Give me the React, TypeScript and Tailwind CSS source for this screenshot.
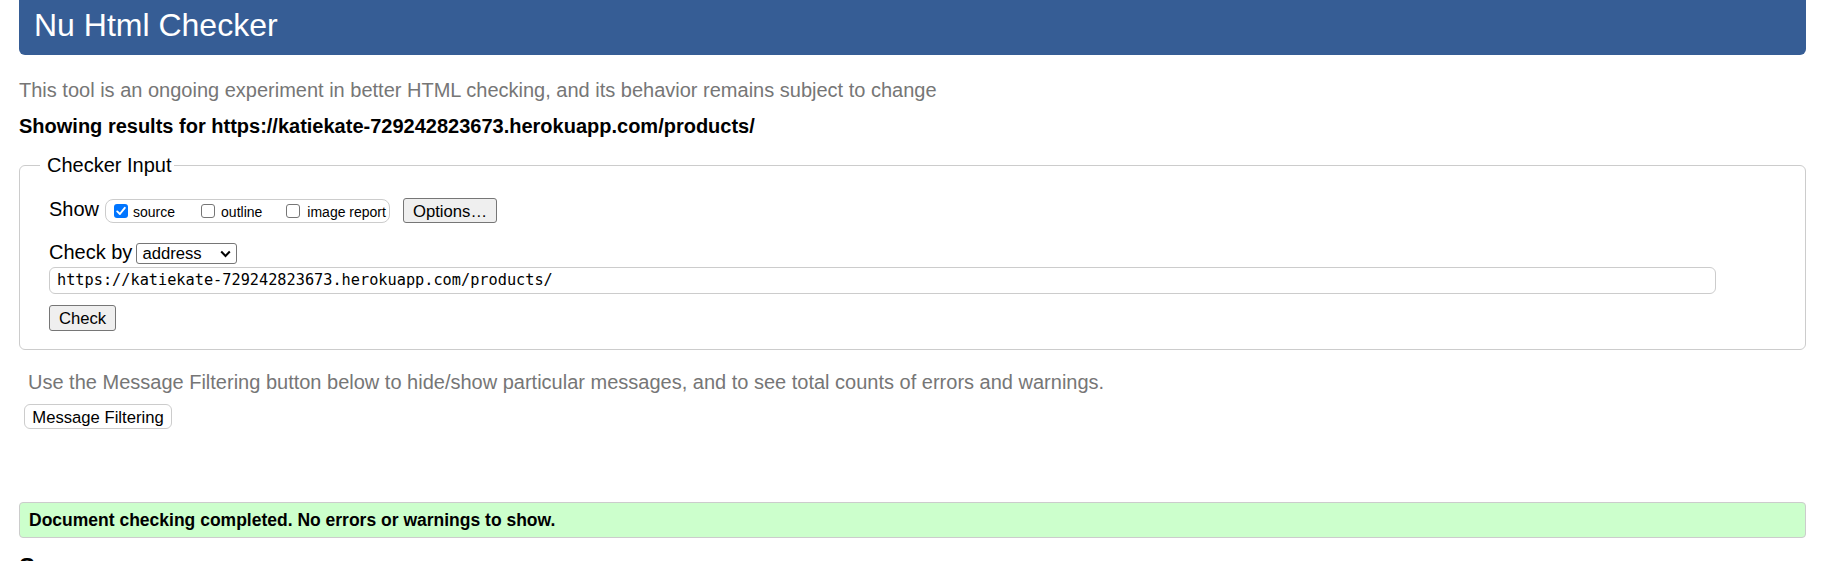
const url = "https://katiekate-729242823673.herokuapp.com/products/";

function Box({ checked }: { checked?: boolean }) {
  if (checked) {
    return (
      <span className="flex h-[14px] w-[14px] shrink-0 items-center justify-center rounded-[3px] bg-[#0075ff]">
        <svg width="12" height="12" viewBox="0 0 12 12">
          <path d="M2.2 6.4 L4.9 9 L9.8 2.8" fill="none" stroke="#fff" strokeWidth="1.9" strokeLinecap="round" strokeLinejoin="round" />
        </svg>
      </span>
    );
  }
  return <span className="block h-[14px] w-[14px] shrink-0 rounded-[3px] border border-[#767676] bg-white" />;
}

export default function App() {
  return (
    <div className="min-h-screen bg-white pl-[19px] pr-[20px] font-['Liberation_Sans',Arial,sans-serif] text-black">
      <header className="h-[55px] rounded-b-[6px] bg-[#365d95] pl-[15px] pt-[7px]">
        <h1 className="text-[32px] leading-[37px] text-white">Nu Html Checker</h1>
      </header>

      <p className="mt-[24px] text-[20px] leading-[23px] text-[#767676]">
        This tool is an ongoing experiment in better HTML checking, and its behavior remains subject to change
      </p>
      <p className="mt-[13px] text-[20px] font-bold leading-[23px]">Showing results for {url}</p>

      <fieldset className="mt-[16px] rounded-[6px] border border-[#cccccc] pb-[18px] pl-[20px]">
        <legend className="pl-[7px] pr-[2px] text-[20px] leading-[23px]">Checker Input</legend>
        <div className="pl-[9px]">
          {/* show options */}
          <div className="mt-[21px] flex h-[25px] items-start">
            <span className="text-[20px] leading-[23px]">Show</span>
            <div className="ml-[6px] mt-[1px] flex h-[24px] w-[285px] items-center rounded-[8px] border border-[#cccccc] pl-[8px] text-[14px]">
              <Box checked />
              <span className="ml-[5px] mt-[3px]">source</span>
              <span className="ml-[26px] flex">
                <Box />
              </span>
              <span className="ml-[6px] mt-[3px]">outline</span>
              <span className="ml-[24px] flex">
                <Box />
              </span>
              <span className="ml-[7px] mt-[3px]">image report</span>
            </div>
            <button className="ml-[13px] h-[25px] w-[94px] rounded-[3px] border border-[#767676] bg-[#efefef] text-[16.67px]">
              Options…
            </button>
          </div>

          <div className="mt-[18px] flex h-[23px] items-start">
            <span className="text-[20px] leading-[23px]">Check by</span>
            <div className="ml-[4px] mt-[2px] flex h-[21px] w-[101px] items-center justify-between rounded-[3px] border border-[#767676] bg-white pl-[5px] pr-[5px] text-[16.67px]">
              <span>address</span>
              <svg width="11" height="8" viewBox="0 0 11 8">
                <path d="M1.2 1.5 L5.5 6 L9.8 1.5" fill="none" stroke="#000" strokeWidth="2" />
              </svg>
            </div>
          </div>

          <div className="mt-[3px] flex h-[27px] w-[1667px] items-center rounded-[6px] border border-[#cccccc] pl-[7px] font-['DejaVu_Sans_Mono',monospace] text-[15.25px]">
            {url}
          </div>

          <button className="mt-[11px] h-[26px] w-[67px] rounded-[3px] border border-[#767676] bg-[#efefef] text-[16.67px]">
            Check
          </button>
        </div>
      </fieldset>

      <p className="mt-[21px] pl-[9px] text-[20px] leading-[23px] text-[#767676]">
        Use the Message Filtering button below to hide/show particular messages, and to see total counts of errors and warnings.
      </p>
      <button className="ml-[5px] mt-[10px] h-[25px] w-[148px] rounded-[6px] border border-[#cccccc] bg-white text-[16.67px]">
        Message Filtering
      </button>

      <div className="mt-[72px] h-[36px] rounded-[4px] border border-[#cccccc] bg-[#ccffcc] pl-[9px] pt-[7px] text-[17.5px] font-bold leading-[20px]">
        Document checking completed. No errors or warnings to show.
      </div>

      <h2 className="mt-[15px] text-[24px] font-bold leading-[28px]">Source</h2>
    </div>
  );
}
